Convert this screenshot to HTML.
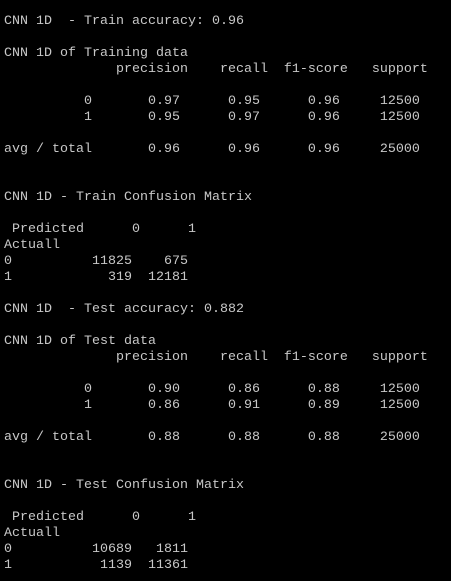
<!DOCTYPE html>
<html><head><meta charset="utf-8"><style>
html,body{margin:0;padding:0;background:#000;width:451px;height:581px;overflow:hidden}
pre{margin:0;padding:14px 0 0 4px;font-family:"Liberation Mono",monospace;font-size:13.33px;line-height:16px;color:#c8c8c8}
</style></head><body><pre>CNN 1D  - Train accuracy: 0.96

CNN 1D of Training data
              precision    recall  f1-score   support

          0       0.97      0.95      0.96     12500
          1       0.95      0.97      0.96     12500

avg / total       0.96      0.96      0.96     25000


CNN 1D - Train Confusion Matrix

 Predicted      0      1
Actuall
0          11825    675
1            319  12181

CNN 1D  - Test accuracy: 0.882

CNN 1D of Test data
              precision    recall  f1-score   support

          0       0.90      0.86      0.88     12500
          1       0.86      0.91      0.89     12500

avg / total       0.88      0.88      0.88     25000


CNN 1D - Test Confusion Matrix

 Predicted      0      1
Actuall
0          10689   1811
1           1139  11361
</pre></body></html>
